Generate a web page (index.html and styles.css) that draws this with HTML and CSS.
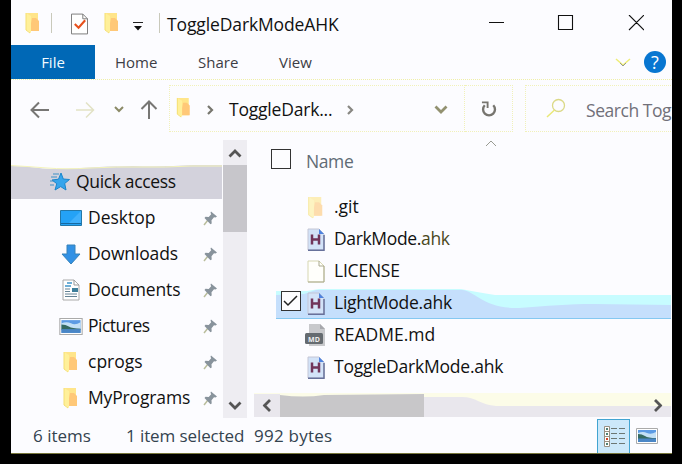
FILE: index.html
```html
<!DOCTYPE html>
<html lang="en">
<head>
<meta charset="utf-8">
<title>ToggleDarkModeAHK</title>
<link rel="stylesheet" href="styles.css">
</head>
<body>
<svg class="defs" aria-hidden="true">
  <symbol id="folder" viewBox="0 0 16 22"><path d="M1 1h12v18H4L1 17z" fill="#ffe58a"/><path d="M5 17l2-11h4l3 3v10H5z" fill="#ffc878"/><path d="M1 1l5 3v17l-5-3z" fill="#fff09a"/><path d="M1 1v17l4 3" fill="none" stroke="#f5df72"/></symbol>
  <symbol id="ahk" viewBox="0 0 18 23"><path d="M1 1h11l5 5v16H1z" fill="#d3e3f8" stroke="#c4c6d5"/><path d="M1 22.200h16V7" fill="none" stroke="#67719b" stroke-width="1.500"/><path d="M12 1v5h5z" fill="#4f83df"/><path d="M5 6.500v10M12 6.500v10M5 11.500h7" stroke="#71365b" stroke-width="2.500" fill="none"/></symbol>
  <symbol id="pin" viewBox="0 0 14 15"><path d="M1 14l4-5" stroke="#b9bd9c" stroke-width="1.500"/><path d="M8 0.500l6 5-1.500 1-1.500-.3-2.500 3 .2 3.300-1.200.8L1.500 7l1-1.200 3.200.2 2.500-2.700-.7-1.500z" fill="#88939c"/></symbol>
  <symbol id="photo" viewBox="0 0 22 16"><path d="M.5.500h21v15H.5z" fill="#fff" stroke="#aaa"/><path d="M2 2h18v12H2z" fill="#5c9be4"/><path d="M2 5q5-2 9 0t9-1v6H2z" fill="#c3e0f6"/><path d="M2 6q4 0 7 2t11 2v1H2z" fill="#356a61"/><path d="M2 10.500h18V14H2z" fill="#4a86c6"/></symbol>
  <symbol id="chev" viewBox="0 0 14 9"><path d="M1.500 1.500L7 7l5.500-5.500" fill="none" stroke="currentColor" stroke-width="2.800"/></symbol>
</svg>
<div class="window">
  <header class="titlebar">
    <svg class="tb-folder"><use href="#folder"/></svg><i class="sep s1"></i>
    <svg class="tb-check" viewBox="0 0 18 22"><path d="M.5.500h12l5 5v16H.5z" fill="#fff" stroke="#777"/><path d="M12.500.500v5h5" fill="none" stroke="#777"/><path d="M4 11l4 4 7-8" fill="none" stroke="#e7501c" stroke-width="2.200"/></svg>
    <svg class="tb-folder f2"><use href="#folder"/></svg>
    <svg class="tb-menu" viewBox="0 0 10 9"><path d="M0 .5h10" stroke="#222"/><path d="M1 4h8L5 8.500z" fill="#111"/></svg><i class="sep s2"></i>
    <h1>ToggleDarkModeAHK</h1>
    <svg class="controls" viewBox="0 0 155 16"><path d="M0 7.500h15M69.500.500h14v14h-14zM140 0l15 15M155 0l-15 15" fill="none" stroke="#111" stroke-width="1.100"/></svg>
  </header>
  <nav class="ribbon">
    <b class="file">File</b><span class="tab home">Home</span><span class="tab share">Share</span><span class="tab view">View</span>
    <svg class="collapse" viewBox="0 0 16 9"><path d="M1 1l7 6 7-6" fill="none" stroke="#eeed76" stroke-width="1.500"/><path d="M5 5l3 3 3-3" fill="none" stroke="#969b91"/></svg><span class="help">?</span>
  </nav>
  <div class="address">
    <svg class="navs" viewBox="0 0 130 20"><path d="M19 10H2M9 2.500L1.500 10 9 17.500M119 19V2M111.500 9L119 1.500 126.500 9" fill="none" stroke="#777674" stroke-width="2"/><path d="M46 10h17M56 2.500l7.500 7.500-7.500 7.500" fill="none" stroke="#e2e2c5" stroke-width="1.500"/><path d="M85 7l4 4 4-4" fill="none" stroke="#8b8a67" stroke-width="2"/></svg>
    <div class="path"><svg class="p-folder"><use href="#folder"/></svg><svg class="right r1" viewBox="0 0 7 10"><path d="M1 1l4 4-4 4" fill="none" stroke="#77766e" stroke-width="2.200"/></svg><span class="crumb">ToggleDark...</span><svg class="right r2" viewBox="0 0 7 10"><path d="M1 1l4 4-4 4" fill="none" stroke="#888782" stroke-width="2.200"/></svg><svg class="drop"><use href="#chev"/></svg></div>
    <div class="refresh"><svg viewBox="0 0 18 18"><path d="M4 4.500A6.300 6.300 0 1 0 13 4.500" fill="none" stroke="#77756f" stroke-width="2.500"/><path d="M1 1.500h6v6" fill="none" stroke="#77756f" stroke-width="2"/></svg></div>
    <div class="search"><svg viewBox="0 0 20 20"><circle cx="12.500" cy="7.500" r="6" fill="none" stroke="#dbd987" stroke-width="1.300"/><path d="M8.500 12L1 19" stroke="#e9e878" stroke-width="1.500"/></svg><span>Search Tog</span></div>
  </div>
  <main>
    <aside>
      <ul class="tree">
        <li class="quick"><svg class="wave" viewBox="0 0 211 36"><path d="M0 2q14 0 28 2t42 0 52-2q30 1 60-1h29v34H0z" fill="#d3d2dc"/><path d="M0 1.500q18 1 36 2.500t44 0 50-1 50-1h31" stroke="#f4f4ba" fill="none"/></svg><svg class="star" viewBox="0 0 20 18"><path d="M11 0l2.300 6 6.200.5-4.800 4L16 17l-5.300-3.400L5 17l1.800-6.300L2 7l6.500-.8z" fill="#35a5ec" stroke="#1985cc"/><path d="M3 1h6M1 4h6M0 8h4M0 12h4" stroke="#3e91c6"/></svg><span>Quick access</span></li>
        <li><svg class="icon" viewBox="0 0 24 22"><path d="M1.500 3.500h21v15h-21z" fill="#24a2f6" stroke="#2377a8"/><path d="M2 16.500h20" stroke="#1769a0"/><path d="M10 16L22 4v12z" fill="#40b0fc"/></svg><span class="desktop">Desktop</span><svg class="pin"><use href="#pin"/></svg></li>
        <li><svg class="icon" viewBox="0 0 24 22"><path d="M8 2h8v9h5l-9 10-9-10h5z" fill="#3291e5" stroke="#3782b8"/></svg><span class="downloads">Downloads</span><svg class="pin"><use href="#pin"/></svg></li>
        <li><svg class="icon" viewBox="0 0 24 22"><path d="M4 1h11l5 5v15H4z" fill="#fff" stroke="#aaa"/><path d="M15 1v5h5" fill="none" stroke="#999"/><path d="M8 4h5M6 7h6" stroke="#4095c9" stroke-width="1.500"/><path d="M6 10h5M6 12.500h5M6 15h12M6 17.500h12" stroke="#648294"/><path d="M13 9h6v4h-6z" fill="#3f7f9b"/></svg><span class="documents">Documents</span><svg class="pin"><use href="#pin"/></svg></li>
        <li><svg class="icon photo"><use href="#photo"/></svg><span class="pictures">Pictures</span><svg class="pin"><use href="#pin"/></svg></li>
        <li><svg class="icon"><use href="#folder"/></svg><span class="cprogs">cprogs</span><svg class="pin"><use href="#pin"/></svg></li>
        <li><svg class="icon"><use href="#folder"/></svg><span class="myprograms">MyPrograms</span><svg class="pin"><use href="#pin"/></svg></li>
      </ul>
      <div class="vscroll"><svg class="up"><use href="#chev"/></svg><i></i><svg class="down"><use href="#chev"/></svg></div>
    </aside>
    <section class="files">
      <div class="heading"><i class="box"></i><span>Name</span><svg class="sort" viewBox="0 0 12 7"><path d="M1 6l5-5 5 5" fill="none" stroke="#999b92"/></svg></div>
      <ul>
        <li><svg class="dim"><use href="#folder"/></svg><span class="git">.git</span></li>
        <li><svg><use href="#ahk"/></svg><span class="dark">DarkMode.<em>ahk</em></span></li>
        <li><svg viewBox="0 0 18 23"><path d="M1 1h11l5 5v16H1z" fill="#fffffb" stroke="#d7d7b2"/><path d="M12 1v5h5v16H1" fill="none" stroke="#aaa98f"/></svg><span class="license">LICENSE</span></li>
        <li class="selected"><svg class="wave" viewBox="0 0 395 32"><path d="M0 4h31l12-2h142q15 3 34 6h176v24H0z" fill="#c7fcff"/><path d="M0 8l28-1 12-4h146c14 1 21 19 57 18 28-2 50-4 75-4l77 1v14H0z" fill="#c5dffc"/><path d="M0 31.500h395" stroke="#85c8f1"/></svg><i class="box"><svg viewBox="0 0 16 14"><path d="M1 7l4 4L14 2" fill="none" stroke="#222" stroke-width="1.500"/></svg></i><svg><use href="#ahk"/></svg><span class="light">LightMode.ahk</span></li>
        <li><svg class="md" viewBox="0 0 21 23"><path d="M4 0h11l5 5v17H4z" fill="#c8c9cc"/><path d="M15 0v5h5z" fill="#a7a8ad"/><rect y="9" width="18" height="11" rx="1.500" fill="#656b70"/><text x="9" y="17.500" text-anchor="middle">MD</text></svg><span class="readme">README.md</span></li>
        <li><svg><use href="#ahk"/></svg><span class="toggle">ToggleDarkMode.ahk</span></li>
      </ul>
      <div class="hscroll"><svg class="wave" viewBox="0 0 417 24"><path d="M0 0h417v24H0z" fill="#fcfce8"/><path d="M0 1h26v23H0zM170 4h38c14 0 19 8 34 9h175v11H170z" fill="#e9e7ed"/><path d="M26 2q24 3 44 0l100-1v23H26z" fill="#c8c7c9"/></svg><svg class="left"><use href="#chev"/></svg><svg class="next"><use href="#chev"/></svg></div>
    </section>
  </main>
  <footer><span class="count">6 items</span><span class="chosen">1 item selected</span><span class="bytes">992 bytes</span>
    <div class="details"><svg viewBox="0 0 22 22"><path d="M.5.500h5v20h-5zM.5 5.500h5M.5 10.500h5M.5 15.500h5" fill="#fff" stroke="#999082"/><path d="M2 3h2M2 8h2M2 18h2" stroke="#508075" stroke-width="2"/><path d="M2 13h2" stroke="#d44227" stroke-width="2"/><path d="M7 2.500h6M15 2.500h6M7 7.500h6M15 7.500h6M7 12.500h6M15 12.500h6M7 17.500h6M15 17.500h6" stroke="#6c7774"/></svg></div><svg class="thumbs"><use href="#photo"/></svg>
  </footer>
</div>
</body>
</html>
```

FILE: styles.css
```css
* { box-sizing: border-box; }
body { margin: 0; width: 682px; height: 464px; overflow: hidden; background: #000; font: 17.5px/24px "Open Sans", sans-serif; color: #111; }
.defs { position: absolute; width: 0; height: 0; }
svg { flex: none; display: block; }
span, h1, b { white-space: nowrap; flex: none; }
ul { margin: 0; padding: 0; list-style: none; }
.window { width: 661px; height: 454px; margin-left: 11px; background: #fcfcff; overflow: hidden; border-bottom: 1px solid #77763b; }
.titlebar { height: 45px; display: flex; align-items: center; padding-left: 14px; }
.tb-folder { width: 16px; height: 22px; }
.sep { width: 1px; height: 20px; background: #c9c9bb; flex: none; }
.s1 { margin-left: 10px; }
.tb-check { width: 17px; height: 22px; margin: 2px 0 0 19px; }
.f2 { margin-left: 16px; }
.tb-menu { width: 10px; height: 9px; margin: 8px 0 0 13px; }
.s2 { margin-left: 16px; }
h1 { width: 173px; margin: 2px 0 0 7px; font-size: 17.5px; font-weight: 400; letter-spacing: -.12px; }
.controls { width: 155px; height: 16px; margin-left: 149px; }
.ribbon { height: 35px; display: flex; align-items: center; border-bottom: 1px dotted #efefa7; font-size: 15px; }
.file { height: 34px; width: 84px; background: #0068b6; color: #f2fbff; text-align: center; line-height: 35px; font-weight: 400; }
.tab { color: #3d3d45; }
.home { width: 42px; margin-left: 20px; }
.share { width: 41px; margin-left: 41px; }
.view { width: 35px; margin-left: 40px; }
.collapse { width: 16px; height: 9px; margin-left: 301px; }
.help { width: 22px; height: 22px; margin-left: 13px; border-radius: 50%; background: #0876d1; color: #fff; text-align: center; font-size: 18px; line-height: 22px; }
.address { height: 60px; padding-top: 5px; display: flex; }
.navs { width: 130px; height: 20px; margin: 15px 0 0 19px; }
.path, .refresh, .search { height: 47px; border: 1px dotted #f1f1b9; display: flex; align-items: center; flex: none; }
.path { width: 296px; margin-left: 9px; }
.p-folder { width: 16px; height: 21px; margin: 0 0 2px 6px; }
.right { width: 7px; height: 10px; margin-top: 2px; }
.r1 { margin-left: 15px; }
.crumb { width: 102px; margin-left: 15px; letter-spacing: -.2px; }
.r2 { margin-left: 16px; }
.drop { width: 14px; height: 9px; margin: 2px 0 0 80px; color: #929170; }
.refresh { width: 48px; border-left: 0; padding-left: 16px; }
.refresh svg { width: 17px; height: 17px; margin-top: 2px; }
.search { width: 160px; margin-left: 12px; padding-left: 20px; color: #717079; }
.search svg { width: 20px; height: 20px; margin: 0 20px 2px 0; }
.search span { letter-spacing: -.45px; padding-top: 2px; }
main { height: 278px; display: flex; }
aside { width: 237px; height: 278px; display: flex; }
.tree { width: 211px; padding-top: 24px; }
.tree li { height: 36px; display: flex; align-items: center; padding-left: 48px; position: relative; }
.wave { position: absolute; inset: 0; width: 100%; height: 100%; z-index: 0; }
.tree .quick { padding-left: 39px; }
.star { width: 20px; height: 18px; position: relative; }
.quick span { position: relative; margin-left: 6px; letter-spacing: -.35px; }
.icon { width: 24px; height: 22px; }
.photo { height: 17px; }
.tree li > span { line-height: 24px; padding-bottom: 2px; }
.tree li:not(.quick) > span { margin-left: 5px; }
.tree .downloads, .tree .documents, .tree .myprograms { letter-spacing: -.15px; }
.tree .pictures { letter-spacing: -.5px; }
.pin { width: 14px; height: 15px; margin-left: auto; margin-right: 5px; }
.vscroll { width: 24px; height: 278px; margin-left: 1px; background: #eeedf2; display: flex; flex-direction: column; align-items: center; color: #555; }
.vscroll i { width: 24px; height: 67px; background: #c7c6cb; margin-top: 7px; }
.up { width: 14px; height: 9px; margin-top: 9px; transform: rotate(180deg); }
.down { width: 14px; height: 9px; margin-top: auto; margin-bottom: 8px; }
.files { width: 424px; padding-left: 6px; }
.heading { height: 51px; display: flex; padding: 9px 0 0 17px; color: #606b75; position: relative; }
.box { width: 20px; height: 20px; border: 1px solid #333; background: #fdfdff; flex: none; position: relative; }
.heading span { margin-left: 15px; letter-spacing: -.4px; }
.sort { width: 12px; height: 7px; position: absolute; left: 231px; top: 0; }
.files li { height: 32px; display: flex; align-items: center; padding-left: 53px; position: relative; }
.files li > svg:not(.wave) { width: 18px; height: 23px; position: relative; }
.files li > span { margin-left: 9px; padding-bottom: 2px; position: relative; }
.files li .dim { opacity: .6; }
.files .selected { padding-left: 27px; }
.files .selected > .wave { left: 22px; width: 395px; }
.selected .box { margin: 0 6px 4px 0; }
.files .dark { letter-spacing: -.35px; }
.files .light { letter-spacing: -.25px; }
.files .toggle, .files .license { letter-spacing: -.22px; }
.box svg { width: 16px; height: 14px; margin: 2px 1px; }
.files li > .md:not(.wave) { width: 21px; margin-left: -2px; margin-right: -1px; }
.md text { font: bold 7px "Open Sans", sans-serif; fill: #eee; }
em { font-style: normal; color: #4a481c; }
.hscroll { width: 417px; height: 24px; margin-top: 10px; padding: 0 6px; display: flex; align-items: center; justify-content: space-between; color: #555; position: relative; }
.left, .next { width: 14px; height: 9px; position: relative; transform: rotate(90deg); }
.next { transform: rotate(-90deg); }
footer { height: 36px; display: flex; align-items: center; color: #34434f; padding-left: 22px; font-size: 17px; }
.count { width: 93px; }
.chosen { width: 128px; letter-spacing: -.1px; }
.bytes { width: 79px; letter-spacing: .25px; }
.details { width: 33px; height: 35px; border: 1px solid #42a4d1; background: #cce8fa; margin-left: 264px; padding: 6px; flex: none; }
.details svg { width: 22px; height: 22px; }
.thumbs { width: 22px; height: 16px; margin-left: 6px; }
```
